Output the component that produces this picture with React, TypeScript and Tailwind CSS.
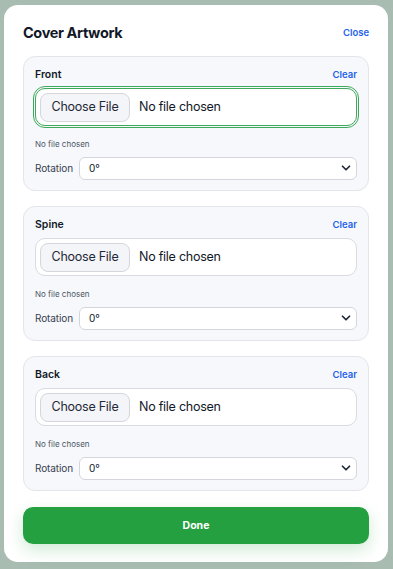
import { ChevronDown } from 'lucide-react'

const sections = [
  { key: 'front', label: 'Front', focused: true },
  { key: 'spine', label: 'Spine', focused: false },
  { key: 'back', label: 'Back', focused: false },
]

const FilePicker = ({ focused }: { focused: boolean }) => (
  <div
    className={
      focused
        ? 'flex h-[38px] items-center rounded-[10px] border border-[#3ea95a] bg-white px-[4px] outline outline-1 outline-offset-[1px] outline-[#3ea95a]'
        : 'flex h-[38px] items-center rounded-[10px] border border-[#d9dbe1] bg-white px-[4px]'
    }
  >
    <div className="flex h-[29px] w-[90px] items-center justify-center rounded-[8px] border border-[#d4d6dc] bg-[#f4f5f8] text-[12.5px] tracking-[-0.02em] text-[#1f2937]">
      Choose File
    </div>
    <span className="ml-[9px] text-[12.5px] tracking-[-0.02em] text-[#111827]">No file chosen</span>
  </div>
)

const App = () => {
  return (
    <div
      className="h-[569px] w-full bg-[#a8bcb1] pl-[4px] pt-[5px]"
      style={{ fontFamily: 'Inter, "Noto Sans", sans-serif' }}
    >
      <div className="flex h-[557px] w-[384px] flex-col rounded-[14px] bg-white px-[19px] pt-[18px]">
        {/* header */}
        <div className="mb-[13px] flex h-[20px] items-center justify-between">
          <span className="text-[14.5px] font-bold tracking-[-0.025em] text-[#111827]">Cover Artwork</span>
          <span className="text-[9.5px] font-semibold text-[#2563eb]">Close</span>
        </div>

        <div className="flex flex-col gap-[15px]">
          {sections.map((s) => (
            <div
              key={s.key}
              className="rounded-[12px] border border-[#e3e5ea] bg-[#f7f8fb] px-[11px] pb-[11px] pt-[12px]"
            >
              <div className="mb-[7px] flex h-[12px] items-center justify-between">
                <span className="text-[10.5px] font-semibold text-[#111827]">{s.label}</span>
                <span className="text-[9.5px] font-semibold text-[#2563eb]">Clear</span>
              </div>
              <FilePicker focused={s.focused} />
              <div className="mt-[12px] flex h-[12px] items-center text-[8px] text-[#4b5563]">
                No file chosen
              </div>
              <div className="mt-[7px] flex h-[22px] items-center gap-[8px]">
                <span className="w-[36px] text-[10px] tracking-[-0.01em] text-[#374151]">Rotation</span>
                <div className="flex h-[23px] flex-1 items-center justify-between rounded-[6px] border border-[#d4d6dc] bg-white pl-[9px] pr-[3px]">
                  <span className="text-[10px] text-[#111827]">0°</span>
                  <ChevronDown size={14} strokeWidth={3} color="#1f2937" />
                </div>
              </div>
            </div>
          ))}
        </div>

        <button className="mt-[16px] flex h-[37px] w-full items-center justify-center rounded-[10px] bg-[#24a040] text-[10.5px] font-bold text-white shadow-[0_6px_16px_rgba(36,160,64,0.22)]">
          Done
        </button>
      </div>
    </div>
  )
}

export default App
